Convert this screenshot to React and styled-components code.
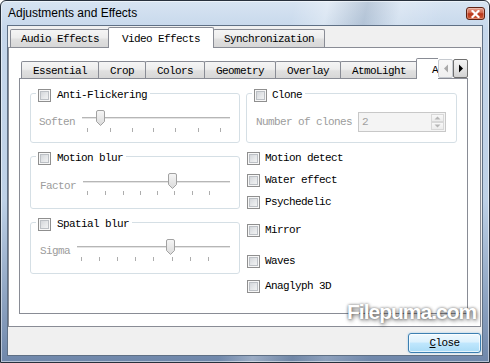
import React from "react";
import styled, { createGlobalStyle } from "styled-components";

const MONO = `"Liberation Mono", "DejaVu Sans Mono", monospace`;

const GlobalStyle = createGlobalStyle`
  html, body { margin: 0; padding: 0; background: #ffffff; }
  #root { width: 490px; height: 363px; }
  *, *::before, *::after { box-sizing: border-box; }
`;

const Window = styled.div`
  position: relative;
  width: 490px;
  height: 363px;
  display: flex;
  flex-direction: column;
  padding: 0 6px 6px;
  border: 1px solid #27303c;
  border-radius: 6px 6px 0 0;
  background:
    linear-gradient(102deg, rgba(255,255,255,0) 52%, rgba(255,255,255,0.3) 58%, rgba(110,128,150,0.25) 65%, rgba(255,255,255,0.2) 71%, rgba(255,255,255,0) 79%),
    linear-gradient(180deg, #d7e4f2 0%, #c6d7eb 8%, #bed1e7 55%, #6f87aa 100%);
  box-shadow: inset 0 0 0 1px rgba(255,255,255,0.5);
  overflow: hidden;
`;

const TitleBar = styled.div`
  flex: none;
  height: 24px;
  display: flex;
  align-items: center;
  justify-content: space-between;
  padding: 0 0 0 1px;
`;

const Title = styled.span`
  font-family: "Segoe UI", "Liberation Sans", Arial, sans-serif;
  font-size: 12px;
  color: #000;
`;

const TitleClose = styled.div`
  flex: none;
  width: 19px;
  height: 13px;
  margin: 1px -2px 0 0;
  display: flex;
  align-items: center;
  justify-content: center;
  border: 1px solid #5e2214;
  border-radius: 3px;
  background: linear-gradient(180deg, #e6a08e 0%, #d0644a 45%, #b8351a 52%, #cf5c38 100%);
  box-shadow: inset 0 0 0 1px rgba(255,255,255,0.3);
`;

const Client = styled.div`
  flex: 1;
  min-height: 0;
  display: flex;
  flex-direction: column;
  background: #f0f0f0;
  border: 1px solid #5f7085;
  padding: 0 1px 0 0;
`;

const TabWidget = styled.div`
  flex: 1;
  min-height: 0;
  display: flex;
  flex-direction: column;
`;

const TabBar = styled.div`
  flex: none;
  display: flex;
  height: ${(p) => p.$h}px;
  background: linear-gradient(to top, #898c95 1px, transparent 1px);
`;

const TabStrip = styled.div`
  flex: 1;
  min-width: 0;
  display: flex;
  align-items: flex-end;
  padding-left: 3px;
  overflow: hidden;
`;

const Tab = styled.div`
  flex: none;
  position: relative;
  z-index: ${(p) => (p.$active ? 1 : 0)};
  display: flex;
  align-items: center;
  justify-content: center;
  height: ${(p) => p.$h}px;
  margin: 0 0 ${(p) => (p.$active ? 0 : 1)}px ${(p) => (p.$active ? -2 : -1)}px;
  padding: 1px ${(p) => p.$pad}px 0;
  border: 1px solid #898c95;
  border-bottom: none;
  border-radius: 2px 2px 0 0;
  background: ${(p) =>
    p.$active
      ? "#ffffff"
      : "linear-gradient(180deg, #f5f5f5 0%, #ededed 45%, #e0e0e0 55%, #d7d7d7 100%)"};
  font-family: ${MONO};
  font-size: 11px;
  letter-spacing: -0.6px;
  color: #000;
  white-space: nowrap;
`;

const ScrollButtons = styled.div`
  flex: none;
  display: flex;
  height: 19px;
  margin-top: 1px;
`;

const ScrollButton = styled.div`
  width: 15px;
  height: 19px;
  display: flex;
  align-items: center;
  justify-content: center;
  border: 1px solid ${(p) => (p.$enabled ? "#6f6f6f" : "#c6cad0")};
  border-radius: 2px;
  background: ${(p) =>
    p.$enabled
      ? "linear-gradient(180deg, #f4f4f4 0%, #e6e6e6 50%, #d2d2d2 100%)"
      : "linear-gradient(180deg, #f8f8f8 0%, #efefef 100%)"};
`;

const OuterPane = styled.div`
  flex: 1;
  min-height: 0;
  display: flex;
  flex-direction: column;
  background: #ffffff;
  border: 1px solid #898c95;
  border-top: none;
  padding: 10px 12px 12px 10px;
`;

const InnerPane = styled.div`
  flex: 1;
  min-height: 0;
  display: grid;
  grid-template-columns: 210px 211px;
  column-gap: 6px;
  align-items: start;
  background: #ffffff;
  border: 1px solid #898c95;
  border-top: none;
  padding: 10px 10px 0;
`;

const Column = styled.div`
  display: flex;
  flex-direction: column;
  gap: ${(p) => p.$gap || 0}px;
`;

const Group = styled.fieldset`
  margin: 0;
  min-width: 0;
  padding: ${(p) => p.$pt}px 9px ${(p) => p.$pb}px ${(p) => p.$pl}px;
  border: 1px solid #d5dfe5;
  border-radius: 3px;
`;

const Legend = styled.legend`
  height: 9px;
  padding: 0 3px 0 2px;
  margin-left: ${(p) => p.$ml}px;
`;

const CheckLine = styled.span`
  display: flex;
  align-items: flex-start;
  gap: ${(p) => p.$gap}px;
`;

const CheckBox = styled.span`
  flex: none;
  display: block;
  width: 13px;
  height: 13px;
  border: 1px solid #8f8f8f;
  background: linear-gradient(135deg, #cbced3 0%, #e6e8ea 55%, #f8f8f8 100%);
  box-shadow: inset 0 0 0 1px #f7f7f7, inset 0 0 0 2px #bcc0c5;
`;

const Text = styled.span`
  font-family: ${MONO};
  font-size: 11px;
  letter-spacing: -0.6px;
  line-height: 13px;
  white-space: nowrap;
  color: ${(p) => (p.$dim ? "#9c9c9c" : "#000000")};
  margin-top: ${(p) => p.$mt || 0}px;
`;

const Row = styled.div`
  display: flex;
  align-items: ${(p) => p.$align || "flex-start"};
  gap: ${(p) => p.$gap}px;
`;

const CheckRow = styled.div`
  display: flex;
  align-items: center;
  gap: 5px;
  height: 13px;
  margin: ${(p) => p.$mt}px 0 0 1px;
`;

const SliderSvg = styled.svg`
  flex: none;
  display: block;
`;

const Spin = styled.div`
  flex: none;
  width: 88px;
  height: 20px;
  display: flex;
  border: 1px solid #c8c8c8;
  background: #f4f4f4;
`;

const SpinValue = styled.span`
  flex: 1;
  padding-left: 3px;
  font-family: ${MONO};
  font-size: 11px;
  line-height: 18px;
  color: #a0a0a0;
`;

const SpinButtons = styled.div`
  flex: none;
  width: 13px;
  display: flex;
  flex-direction: column;
  margin: 1px 1px 1px 0;
`;

const SpinButton = styled.div`
  flex: 1;
  display: flex;
  align-items: center;
  justify-content: center;
  border: 1px solid #d8d8d8;
  background: linear-gradient(180deg, #f8f8f8, #ececec);
`;

const Footer = styled.div`
  flex: none;
  height: 28px;
  display: flex;
  justify-content: flex-end;
  align-items: flex-start;
  padding-top: 6px;
`;

const PushButton = styled.button`
  width: 73px;
  height: 20px;
  padding: 0;
  border: 1px solid #3c7fb1;
  border-radius: 3px;
  background: linear-gradient(180deg, #eef8fe 0%, #dcf1fd 45%, #c0e7fd 50%, #a9dbf6 100%);
  box-shadow: inset 0 0 0 1px rgba(255,255,255,0.7), 0 0 2px rgba(90,170,230,0.6);
  font-family: ${MONO};
  font-size: 11px;
  letter-spacing: -0.6px;
  color: #000;
`;

const Watermark = styled.div`
  position: absolute;
  left: 346px;
  top: 299px;
  font-family: "Liberation Sans", Arial, sans-serif;
  font-weight: bold;
  font-size: 21px;
  letter-spacing: -1px;
  color: #ffffff;
  text-shadow: 0 0 3px rgba(0,0,0,0.55), 1px 2px 4px rgba(0,0,0,0.45);
  pointer-events: none;
`;

function Check({ label, gap = 6 }) {
  return (
    <CheckLine $gap={gap}>
      <CheckBox />
      <Text>{label}</Text>
    </CheckLine>
  );
}

function Slider({ id, width, ticks, handle, track }) {
  const L = handle;
  const d = `M${L + 0.5} 2 Q${L + 0.5} 0.5 ${L + 2} 0.5 H${L + 7} Q${L + 8.5} 0.5 ${L + 8.5} 2 V11.5 L${L + 4.5} 15.5 L${L + 0.5} 11.5 Z`;
  return (
    <SliderSvg width={width} height={24} viewBox={`0 0 ${width} 24`}>
      <defs>
        <linearGradient id={id} x1="0" y1="0" x2="0" y2="1">
          <stop offset="0" stopColor="#f6f6f6" />
          <stop offset="1" stopColor="#dadada" />
        </linearGradient>
      </defs>
      <rect x="0" y={track} width={width} height="1" fill="#b6b6b6" />
      <rect x="0" y={track + 1} width={width} height="1" fill="#e4e4e4" />
      {ticks.map((t) => (
        <rect key={t} x={t} y="18" width="1" height="4" fill="#adadad" />
      ))}
      <path d={d} fill={`url(#${id})`} stroke="#a2a2a2" />
    </SliderSvg>
  );
}

function Arrow({ dir, color }) {
  return (
    <svg width="6" height="9" viewBox="0 0 6 9">
      {dir === "left" ? (
        <path d="M5 0.5 V8.5 L1 4.5 Z" fill={color} />
      ) : (
        <path d="M1 0.5 V8.5 L5 4.5 Z" fill={color} />
      )}
    </svg>
  );
}

function SpinArrow({ up }) {
  return (
    <svg width="7" height="4" viewBox="0 0 7 4">
      <path d={up ? "M0.5 3.5 L3.5 0.5 L6.5 3.5 Z" : "M0.5 0.5 L3.5 3.5 L6.5 0.5 Z"} fill="#b5b5b5" />
    </svg>
  );
}

const outerTabs = [
  { label: "Audio Effects", pad: 10 },
  { label: "Video Effects", pad: 13, active: true },
  { label: "Synchronization", pad: 10 },
];

const innerTabs = [
  { label: "Essential", pad: 11 },
  { label: "Crop", pad: 11 },
  { label: "Colors", pad: 11 },
  { label: "Geometry", pad: 11 },
  { label: "Overlay", pad: 11 },
  { label: "AtmoLight", pad: 11 },
  { label: "Advanced", pad: 15, active: true },
];

const rightChecks = [
  { label: "Motion detect", mt: 9 },
  { label: "Water effect", mt: 9 },
  { label: "Psychedelic", mt: 9 },
  { label: "Mirror", mt: 15 },
  { label: "Waves", mt: 18 },
  { label: "Anaglyph 3D", mt: 12 },
];

export default function App() {
  return (
    <>
      <GlobalStyle />
      <Window>
        <TitleBar>
          <Title>Adjustments and Effects</Title>
          <TitleClose>
            <svg width="9" height="8" viewBox="0 0 9 8">
              <path d="M1.5 1 L7.5 7 M7.5 1 L1.5 7" stroke="#ffffff" strokeWidth="2.2" strokeLinecap="square" />
            </svg>
          </TitleClose>
        </TitleBar>
        <Client>
          <TabWidget>
            <TabBar $h={22}>
              <TabStrip>
                {outerTabs.map((t) => (
                  <Tab key={t.label} $active={t.active} $pad={t.pad} $h={t.active ? 21 : 18}>
                    {t.label}
                  </Tab>
                ))}
              </TabStrip>
            </TabBar>
            <OuterPane>
              <TabWidget>
                <TabBar $h={21}>
                  <TabStrip>
                    {innerTabs.map((t) => (
                      <Tab key={t.label} $active={t.active} $pad={t.pad} $h={t.active ? 21 : 17}>
                        {t.label}
                      </Tab>
                    ))}
                  </TabStrip>
                  <ScrollButtons>
                    <ScrollButton>
                      <Arrow dir="left" color="#a9a9a9" />
                    </ScrollButton>
                    <ScrollButton $enabled>
                      <Arrow dir="right" color="#000000" />
                    </ScrollButton>
                  </ScrollButtons>
                </TabBar>
                <InnerPane>
                  <Column $gap={9}>
                    <Group $pt={12} $pb={8} $pl={8}>
                      <Legend $ml={-3}>
                        <Check label="Anti-Flickering" />
                      </Legend>
                      <Row $gap={7}>
                        <Text $dim $mt={6}>Soften</Text>
                        <Slider id="s1" width={148} track={7} handle={14} ticks={[5, 28, 50, 71, 93, 116, 138]} />
                      </Row>
                    </Group>
                    <Group $pt={12} $pb={11} $pl={9}>
                      <Legend $ml={-4}>
                        <Check label="Motion blur" />
                      </Legend>
                      <Row $gap={7}>
                        <Text $dim $mt={7}>Factor</Text>
                        <Slider id="s2" width={147} track={8} handle={85} ticks={[4, 22, 40, 57, 74, 91, 109, 126]} />
                      </Row>
                    </Group>
                    <Group $pt={12} $pb={10} $pl={9}>
                      <Legend $ml={-4}>
                        <Check label="Spatial blur" />
                      </Legend>
                      <Row $gap={7}>
                        <Text $dim $mt={6}>Sigma</Text>
                        <Slider id="s3" width={153} track={7} handle={89} ticks={[4, 22, 40, 58, 76, 95, 113, 131]} />
                      </Row>
                    </Group>
                  </Column>
                  <Column>
                    <Group $pt={14} $pb={10} $pl={9}>
                      <Legend $ml={-4}>
                        <Check label="Clone" gap={5} />
                      </Legend>
                      <Row $gap={6} $align="center">
                        <Text $dim>Number of clones</Text>
                        <Spin>
                          <SpinValue>2</SpinValue>
                          <SpinButtons>
                            <SpinButton>
                              <SpinArrow up />
                            </SpinButton>
                            <SpinButton>
                              <SpinArrow />
                            </SpinButton>
                          </SpinButtons>
                        </Spin>
                      </Row>
                    </Group>
                    {rightChecks.map((c) => (
                      <CheckRow key={c.label} $mt={c.mt}>
                        <CheckBox />
                        <Text>{c.label}</Text>
                      </CheckRow>
                    ))}
                  </Column>
                </InnerPane>
              </TabWidget>
            </OuterPane>
          </TabWidget>
          <Footer>
            <PushButton>
              <u>C</u>lose
            </PushButton>
          </Footer>
        </Client>
        <Watermark>Filepuma.com</Watermark>
      </Window>
    </>
  );
}
